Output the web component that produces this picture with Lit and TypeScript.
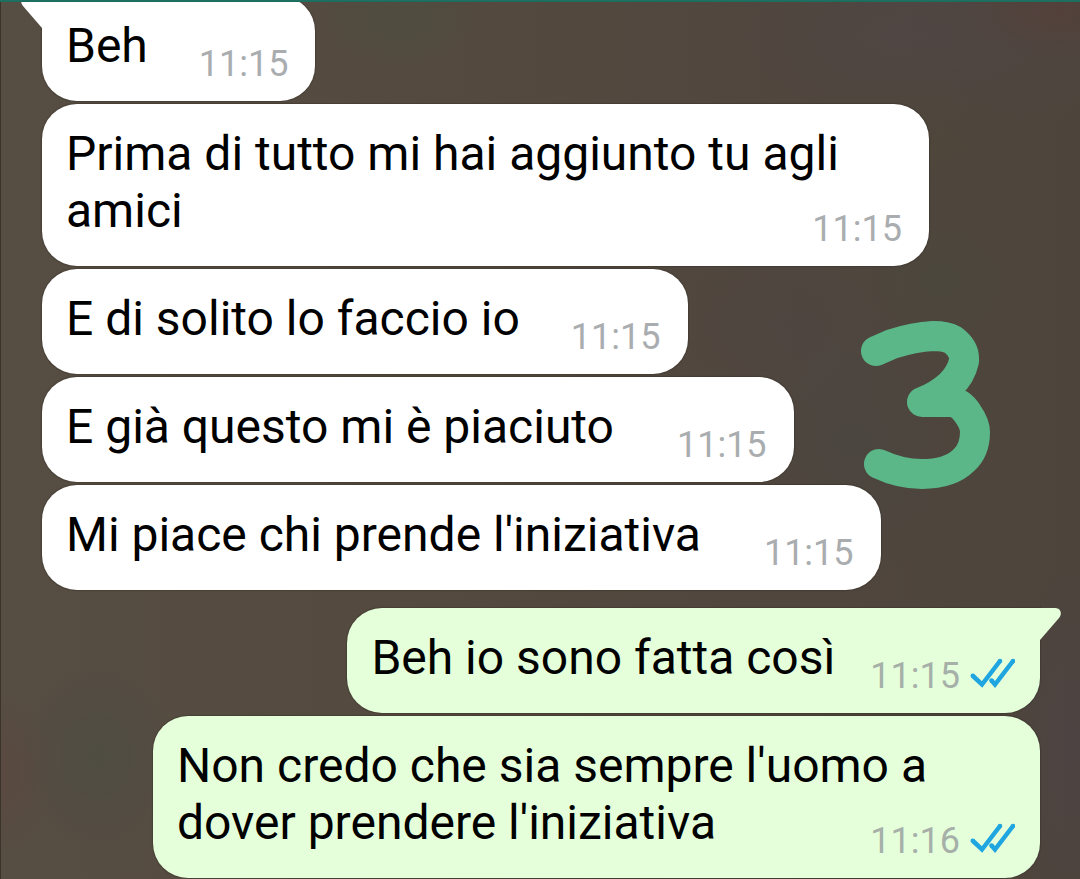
import { LitElement, html, css, svg, nothing } from "lit";
import { customElement, property } from "lit/decorators.js";

interface Message {
  text: string;
  time: string;
  sent?: boolean;
  tail?: boolean;
  roomy?: boolean;
}

const MESSAGES: Message[] = [
  { text: "Beh", time: "11:15", tail: true },
  { text: "Prima di tutto mi hai aggiunto tu agli amici", time: "11:15" },
  { text: "E di solito lo faccio io", time: "11:15" },
  { text: "E già questo mi è piaciuto", time: "11:15", roomy: true },
  { text: "Mi piace chi prende l'iniziativa", time: "11:15", roomy: true },
  { text: "Beh io sono fatta così", time: "11:15", sent: true, tail: true },
  { text: "Non credo che sia sempre l'uomo a dover prendere l'iniziativa", time: "11:16", sent: true },
];

@customElement("chat-bubble")
class ChatBubble extends LitElement {
  @property({ attribute: false }) message!: Message;

  static styles = css`
    :host {
      display: flex;
    }
    .bubble {
      position: relative;
      box-sizing: border-box;
      max-width: calc(100% - 111px);
      padding: 21px 27px 16px 24px;
      border-radius: 35px;
      background: #fff;
      box-shadow: 0 0 1px 1px rgba(30, 26, 20, 0.25);
      color: #000;
      font-size: 48px;
      line-height: 57px;
    }
    .sent {
      margin-left: auto;
      padding-right: 25px;
      background: #e5ffdb;
    }
    .tail {
      border-top-left-radius: 0;
    }
    .sent.tail {
      border-top-left-radius: 35px;
      border-top-right-radius: 0;
    }
    .meta {
      float: right;
      display: flex;
      align-items: center;
      gap: 10px;
      margin: 26px 0 0 51px;
      color: #a9adb0;
      font-size: 36px;
      line-height: 42px;
    }
    .roomy .meta {
      margin-left: 63px;
    }
    .sent .meta {
      margin-left: 35px;
      color: #a6b0a8;
    }
    .ticks {
      display: block;
      width: 45px;
      height: 32px;
      margin-bottom: 4px;
    }
    .horn {
      position: absolute;
      top: 0;
      right: 100%;
      width: 21px;
      height: 33px;
      fill: #fff;
    }
    .sent .horn {
      right: auto;
      left: 100%;
      fill: #e5ffdb;
    }
  `;

  render() {
    const { text, time, sent, tail, roomy } = this.message;
    const shape = sent
      ? svg`<path d="M-1 0H15C20 0 23 5 19 10L0 32H-1Z" />`
      : svg`<path d="M22 0H6C1 0 -2 5 2 10L21 32H22Z" />`;
    return html`
      <div class="bubble ${sent ? "sent" : ""} ${tail ? "tail" : ""} ${roomy ? "roomy" : ""}">
        ${tail ? html`<svg class="horn" viewBox="0 0 21 33" overflow="visible" aria-hidden="true">${shape}</svg>` : nothing}
        <span class="text">${text}</span><span class="meta">
          <time>${time}</time>
          ${sent
            ? html`<svg class="ticks" viewBox="0 0 45 32" role="img" aria-label="Letto"
                fill="none" stroke="#1fa5df" stroke-width="4.500">
                <path d="M3 18L12 26.500L30 3" />
                <path d="M21.500 22.500L25 26.500L43 3" />
                <g fill="#1fa5df" stroke="none">
                  <circle cx="2.800" cy="17.800" r="2.300" />
                  <circle cx="30" cy="3" r="2.300" />
                  <circle cx="21.500" cy="22.500" r="2.300" />
                  <circle cx="43" cy="3" r="2.300" />
                </g>
              </svg>`
            : nothing}
        </span>
      </div>
    `;
  }
}

@customElement("app-root")
class AppRoot extends LitElement {
  static styles = css`
    :host {
      display: block;
      font-family: Roboto, "Liberation Sans", sans-serif;
    }
    .screen {
      position: relative;
      box-sizing: border-box;
      display: flex;
      flex-direction: column;
      justify-content: flex-end;
      height: 100vh;
      overflow: hidden;
      padding: 0 40px 1px 42px;
      background:
        radial-gradient(ellipse 90px 50px at 98% 1%, rgba(86, 62, 57, 0.7), transparent),
        radial-gradient(ellipse 240px 110px at 85% 4%, rgba(80, 70, 68, 0.9), transparent),
        radial-gradient(ellipse 110px 60px at 84% 14%, rgba(78, 71, 57, 0.8), transparent),
        radial-gradient(ellipse 80px 50px at 37% 2%, rgba(77, 77, 63, 0.8), transparent),
        radial-gradient(ellipse 80px 70px at 87% 32%, rgba(74, 72, 60, 0.7), transparent),
        radial-gradient(ellipse 150px 110px at 73% 37%, rgba(78, 69, 65, 0.8), transparent),
        radial-gradient(ellipse 120px 140px at 79% 50%, rgba(74, 69, 64, 0.8), transparent),
        radial-gradient(ellipse 60px 190px at 99% 85%, rgba(77, 67, 67, 0.9), transparent),
        radial-gradient(ellipse 75px 90px at 9% 86%, rgba(78, 77, 66, 0.9), transparent),
        radial-gradient(ellipse 55px 80px at 0% 88%, rgba(91, 72, 63, 0.8), transparent),
        linear-gradient(90deg, #564d43, #53493f 45%, #4d443c);
    }
    .top-edge {
      position: absolute;
      inset: 0 0 auto 0;
      height: 1px;
      background: #1b7262;
      border-bottom: 1px solid rgba(38, 100, 86, 0.5);
      z-index: 1;
    }
    .side-edge {
      position: absolute;
      inset: 0 auto 0 0;
      width: 1px;
      background: #39332b;
    }
    .thread {
      display: flex;
      flex-direction: column;
      gap: 18px;
    }
    .group {
      display: flex;
      flex-direction: column;
      gap: 3px;
    }
    .scribble {
      position: absolute;
      right: 88px;
      bottom: 388px;
      width: 132px;
      height: 172px;
    }
  `;

  render() {
    const groups = [MESSAGES.filter((m) => !m.sent), MESSAGES.filter((m) => m.sent)];
    return html`
      <main class="screen">
        <div class="top-edge"></div>
        <div class="side-edge"></div>
        <div class="thread">
          ${groups.map(
            (group) => html`<section class="group">
              ${group.map((m) => html`<chat-bubble .message=${m}></chat-bubble>`)}
            </section>`
          )}
        </div>
        <svg class="scribble" viewBox="860 319 132 172" role="img" aria-label="3"
          fill="none" stroke="#5bb787" stroke-width="30" stroke-linecap="round" stroke-linejoin="round">
          <path d="M876 351L892 344Q914 337 933 336Q946 336 953 340Q965 349 964 361Q961 375 950 385Q938 396 922 402L952 402Q961 403 968 414Q975 424 975 432Q975 450 964 460Q950 474 922 474Q900 474 879 464" />
        </svg>
      </main>
    `;
  }
}
